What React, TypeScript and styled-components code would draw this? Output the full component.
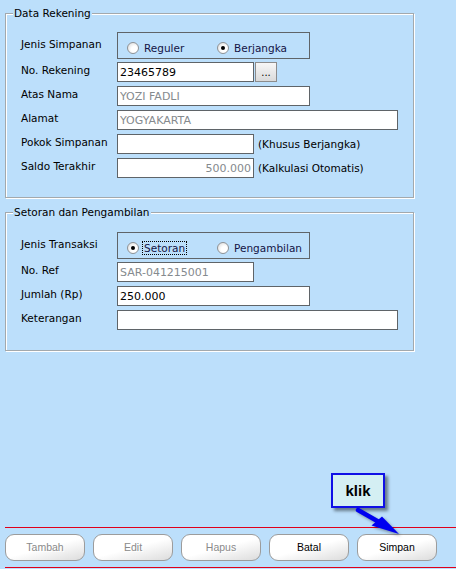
import React from "react";
import styled, { createGlobalStyle } from "styled-components";

const GlobalStyle = createGlobalStyle`
  html, body {
    margin: 0;
    padding: 0;
  }
  body {
    background: #bcdffb;
    font-family: "DejaVu Sans", Verdana, sans-serif;
  }
`;

const Page = styled.div`
  position: relative;
  width: 456px;
  height: 569px;
  box-sizing: border-box;
  padding: 13px 0 0 5px;
  display: flex;
  flex-direction: column;
  background: #bcdffb;
`;

const Group = styled.div<{ $h: number; $top: number; $mt?: number }>`
  position: relative;
  box-sizing: border-box;
  width: 409px;
  height: ${(p) => p.$h}px;
  margin-top: ${(p) => p.$mt || 0}px;
  padding: ${(p) => p.$top}px 0 0 15px;
  border: 1px solid #a3a9ad;
  box-shadow: inset 1px 1px 0 #ffffff, 1px 1px 0 #ffffff;
  display: flex;
  flex-direction: column;
`;

const Legend = styled.div`
  position: absolute;
  top: -7px;
  left: 7px;
  padding: 0 1px;
  background: #bcdffb;
  font-size: 10.5px;
  line-height: 13px;
  color: #000;
`;

const Row = styled.div<{ $gap?: number }>`
  display: flex;
  align-items: flex-start;
  margin-bottom: ${(p) => (p.$gap === undefined ? 4 : p.$gap)}px;
`;

const Label = styled.div<{ $pt?: number }>`
  width: 96px;
  flex: none;
  padding-top: ${(p) => p.$pt || 2}px;
  font-size: 10.5px;
  line-height: 13px;
  color: #000;
`;

const Field = styled.input<{ $w: number; $align?: string; $dim?: boolean }>`
  box-sizing: border-box;
  width: ${(p) => p.$w}px;
  height: 20px;
  margin: 0;
  padding: 0 2px;
  border: 1px solid #5f6468;
  background: #fff;
  font-family: "DejaVu Sans", Verdana, sans-serif;
  font-size: 11px;
  color: ${(p) => (p.$dim ? "#858a8e" : "#000")};
  text-align: ${(p) => p.$align || "left"};
  outline: none;
`;

const DotsButton = styled.div`
  box-sizing: border-box;
  width: 22px;
  height: 20px;
  margin-left: 1px;
  border: 1px solid #8c8c8c;
  background: linear-gradient(#f7f7f7, #dadada);
  font-size: 10px;
  line-height: 20px;
  text-align: center;
  color: #000;
`;

const Suffix = styled.div`
  margin-left: 4px;
  padding-top: 4px;
  font-size: 10.5px;
  line-height: 13px;
  color: #000;
`;

const RadioBox = styled.div`
  box-sizing: border-box;
  width: 193px;
  height: 27px;
  border: 1px solid #5f6468;
  padding: 5px 0 0 9px;
  display: grid;
  grid-template-columns: 90px auto;
  align-items: center;
`;

const RadioOption = styled.div`
  display: flex;
  align-items: center;
  gap: 4px;
`;

const Circle = styled.span<{ $on?: boolean }>`
  position: relative;
  box-sizing: border-box;
  width: 12px;
  height: 12px;
  border-radius: 50%;
  border: 1px solid #8e9296;
  background: radial-gradient(circle at 65% 65%, #ffffff 35%, #d6d6d6 100%);
  &::after {
    content: "";
    display: ${(p) => (p.$on ? "block" : "none")};
    position: absolute;
    left: 3px;
    top: 3px;
    width: 4px;
    height: 4px;
    border-radius: 50%;
    background: #000;
  }
`;

const RadioText = styled.span<{ $focus?: boolean }>`
  padding: 0 1px;
  font-size: 10.5px;
  line-height: 12px;
  color: #141446;
  outline: ${(p) => (p.$focus ? "1px dotted #000" : "none")};
`;

const Footer = styled.div`
  margin-top: auto;
  margin-bottom: 1px;
  border-top: 1px solid #e0001a;
  border-bottom: 1px solid #e0001a;
  padding: 6px 0;
  display: flex;
  gap: 8px;
`;

const ActionButton = styled.div<{ $disabled?: boolean }>`
  box-sizing: border-box;
  width: 80px;
  height: 27px;
  border: 1px solid #9c9c9c;
  border-radius: 9px;
  background: linear-gradient(165deg, #ffffff 0%, #ffffff 50%, #dcdcdc 100%);
  font-family: "Liberation Sans", Arial, sans-serif;
  font-size: 10.5px;
  line-height: 25px;
  text-align: center;
  color: ${(p) => (p.$disabled ? "#8a8a8a" : "#000")};
  text-shadow: ${(p) => (p.$disabled ? "1px 1px 0 #ffffff" : "none")};
`;

const Callout = styled.div`
  position: absolute;
  left: 331px;
  top: 473px;
  box-sizing: border-box;
  width: 54px;
  height: 35px;
  border: 2px solid #1010e6;
  background: #d4eff3;
  box-shadow: 3px 3px 3px rgba(0, 0, 0, 0.45);
  font-family: "Liberation Sans", Arial, sans-serif;
  font-weight: bold;
  font-size: 15px;
  line-height: 31px;
  text-align: center;
  color: #000;
`;

const Arrow = styled.svg`
  position: absolute;
  left: 350px;
  top: 505px;
  overflow: visible;
  filter: drop-shadow(2px 2px 1.5px rgba(0, 0, 0, 0.35));
`;

type Opt = { text: string; on?: boolean; focus?: boolean };

const Radios = ({ opts }: { opts: Opt[] }) => (
  <RadioBox>
    {opts.map((o) => (
      <RadioOption key={o.text}>
        <Circle $on={o.on} />
        <RadioText $focus={o.focus}>{o.text}</RadioText>
      </RadioOption>
    ))}
  </RadioBox>
);

export default function App() {
  return (
    <>
      <GlobalStyle />
      <Page>
        <Group $h={185} $top={18}>
          <Legend>Data Rekening</Legend>
          <Row $gap={3}>
            <Label $pt={6}>Jenis Simpanan</Label>
            <Radios opts={[{ text: "Reguler" }, { text: "Berjangka", on: true }]} />
          </Row>
          <Row>
            <Label>No. Rekening</Label>
            <Field $w={137} readOnly defaultValue="23465789" />
            <DotsButton>...</DotsButton>
          </Row>
          <Row>
            <Label>Atas Nama</Label>
            <Field $w={193} $dim readOnly defaultValue="YOZI FADLI" />
          </Row>
          <Row>
            <Label>Alamat</Label>
            <Field $w={281} $dim readOnly defaultValue="YOGYAKARTA" />
          </Row>
          <Row>
            <Label>Pokok Simpanan</Label>
            <Field $w={137} readOnly defaultValue="" />
            <Suffix>(Khusus Berjangka)</Suffix>
          </Row>
          <Row>
            <Label>Saldo Terakhir</Label>
            <Field $w={137} $dim $align="right" readOnly defaultValue="500.000" />
            <Suffix>(Kalkulasi Otomatis)</Suffix>
          </Row>
        </Group>

        <Group $h={139} $top={19} $mt={14}>
          <Legend>Setoran dan Pengambilan</Legend>
          <Row $gap={3}>
            <Label $pt={6}>Jenis Transaksi</Label>
            <Radios opts={[{ text: "Setoran", on: true, focus: true }, { text: "Pengambilan" }]} />
          </Row>
          <Row>
            <Label>No. Ref</Label>
            <Field $w={137} $dim readOnly defaultValue="SAR-041215001" />
          </Row>
          <Row>
            <Label>Jumlah (Rp)</Label>
            <Field $w={193} readOnly defaultValue="250.000" />
          </Row>
          <Row>
            <Label>Keterangan</Label>
            <Field $w={281} readOnly defaultValue="" />
          </Row>
        </Group>

        <Footer>
          <ActionButton $disabled>Tambah</ActionButton>
          <ActionButton $disabled>Edit</ActionButton>
          <ActionButton $disabled>Hapus</ActionButton>
          <ActionButton>Batal</ActionButton>
          <ActionButton>Simpan</ActionButton>
        </Footer>

        <Callout>klik</Callout>
        <Arrow width="60" height="32" viewBox="0 0 60 32">
          <line x1="8" y1="5" x2="29" y2="17" stroke="#0000f0" strokeWidth="4.5" strokeLinecap="round" />
          <polygon points="49,29 21.5,20.5 32,11.5" fill="#0000f0" />
        </Arrow>
      </Page>
    </>
  );
}
